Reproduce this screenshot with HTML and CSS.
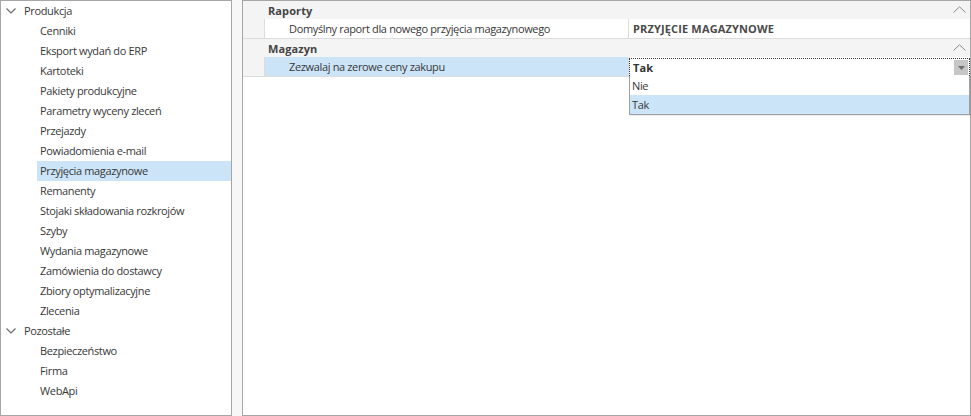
FILE: index.html
```html
<!DOCTYPE html>
<html>
  <head>
    <meta charset='UTF-8'>
    <title>Ustawienia</title>
    <link rel="stylesheet" href="styles.css">
  </head>
  <body>
    <div class='layout'>
      <div class='tree'>
        <div class='tree__node'>
          <svg class='tree__chevron' width='10' height='6' viewBox='0 0 10 6'><path d='M0.5 0.5 L5 5 L9.5 0.5' fill='none' stroke='#6a6a6a' stroke-width='1.2'/></svg>
          <span>Produkcja</span>
        </div>
        <div class='tree__item'>Cenniki</div>
        <div class='tree__item'>Eksport wydań do ERP</div>
        <div class='tree__item'>Kartoteki</div>
        <div class='tree__item'>Pakiety produkcyjne</div>
        <div class='tree__item'>Parametry wyceny zleceń</div>
        <div class='tree__item'>Przejazdy</div>
        <div class='tree__item'>Powiadomienia e-mail</div>
        <div class='tree__item tree__item--selected'>Przyjęcia magazynowe</div>
        <div class='tree__item'>Remanenty</div>
        <div class='tree__item'>Stojaki składowania rozkrojów</div>
        <div class='tree__item'>Szyby</div>
        <div class='tree__item'>Wydania magazynowe</div>
        <div class='tree__item'>Zamówienia do dostawcy</div>
        <div class='tree__item'>Zbiory optymalizacyjne</div>
        <div class='tree__item'>Zlecenia</div>
        <div class='tree__node'>
          <svg class='tree__chevron' width='10' height='6' viewBox='0 0 10 6'><path d='M0.5 0.5 L5 5 L9.5 0.5' fill='none' stroke='#6a6a6a' stroke-width='1.2'/></svg>
          <span>Pozostałe</span>
        </div>
        <div class='tree__item'>Bezpieczeństwo</div>
        <div class='tree__item'>Firma</div>
        <div class='tree__item'>WebApi</div>
      </div>

      <div class='grid'>
        <div class='grid__group'>
          <span>Raporty</span>
          <svg class='grid__collapse' width='13' height='7' viewBox='0 0 13 7'><path d='M0.5 6.5 L6.5 0.8 L12.5 6.5' fill='none' stroke='#8a8a8a' stroke-width='1'/></svg>
        </div>
        <div class='grid__row'>
          <div class='grid__label'>Domyślny raport dla nowego przyjęcia magazynowego</div>
          <div class='grid__value'>PRZYJĘCIE MAGAZYNOWE</div>
        </div>
        <div class='grid__group'>
          <span>Magazyn</span>
          <svg class='grid__collapse' width='13' height='7' viewBox='0 0 13 7'><path d='M0.5 6.5 L6.5 0.8 L12.5 6.5' fill='none' stroke='#8a8a8a' stroke-width='1'/></svg>
        </div>
        <div class='grid__row grid__row--selected'>
          <div class='grid__label'>Zezwalaj na zerowe ceny zakupu</div>
          <div class='grid__value grid__value--edit'>
            <div class='editor'>
              <span class='editor__text'>Tak</span>
              <div class='editor__btn'>
                <svg width='7' height='4' viewBox='0 0 7 4'><path d='M0 0 L7 0 L3.5 4 Z' fill='#6e6e6e'/></svg>
              </div>
            </div>
            <div class='popup'>
              <div class='popup__item'>Nie</div>
              <div class='popup__item popup__item--selected'>Tak</div>
            </div>
          </div>
        </div>
      </div>
    </div>
  </body>
</html>
```

FILE: styles.css
```css
html,
body {
	margin: 0;
}

body {
	width: 971px;
	height: 416px;
	background: #f7f7f7;
	font-family: 'Open Sans', 'Noto Sans', Arial, sans-serif;
	font-size: 11px;
	letter-spacing: -0.35px;
	color: #383838;
	overflow: hidden;
}

.layout {
	display: flex;
	gap: 10px;
	height: 416px;
}

.tree {
	width: 230px;
	height: 414px;
	border: 1px solid #a6a6a6;
	background: #fff;
	flex: none;
}

  .tree__node,
  .tree__item {
  	height: 20px;
  	line-height: 20px;
  	white-space: nowrap;
  }

  .tree__node {
  	display: flex;
  	align-items: center;
  }

  .tree__chevron {
  	margin: 0 8px 0 5px;
  }

  .tree__item {
  	margin-left: 36px;
  	padding-left: 3px;
  }

  .tree__item--selected {
  	background: #cce4f7;
  }

.grid {
	flex: 1;
	height: 414px;
	border: 1px solid #a6a6a6;
	background: #fff;
}

  .grid__group {
  	display: flex;
  	align-items: center;
  	height: 18px;
  	padding-left: 25px;
  	background: #f4f4f4;
  	font-weight: bold;
  	letter-spacing: 0.1px;
  	color: #444;
  }

  .grid__group span {
  	flex: 1;
  }

  .grid__collapse {
  	margin-right: 4px;
  	margin-top: -2px;
  }

  .grid__row {
  	display: flex;
  	height: 19px;
  	padding-left: 21px;
  	background: #f4f4f4;
  	border-bottom: 1px solid #dcdcdc;
  }

  .grid__label {
  	width: 339px;
  	padding-left: 24px;
  	line-height: 19px;
  	background: #fff;
  	border-left: 1px solid #dcdcdc;
  	white-space: nowrap;
  }

  .grid__row--selected .grid__label {
  	background: #cce4f7;
  }

  .grid__value {
  	flex: 1;
  	padding-left: 4px;
  	line-height: 19px;
  	background: #fff;
  	border-left: 1px solid #dcdcdc;
  	font-weight: bold;
  	letter-spacing: 0.15px;
  	color: #4a4a4a;
  	white-space: nowrap;
  }

  .grid__value--edit {
  	position: relative;
  	padding-left: 0;
  	color: #333;
  }

    .editor {
    	display: flex;
    	height: 17px;
    	margin-top: 1px;
    	border: 1px dotted #333;
    	border-bottom: none;
    	align-items: center;
    }

    .editor__text {
    	flex: 1;
    	padding-left: 3px;
    	line-height: 17px;
    }

    .editor__btn {
    	display: flex;
    	align-items: center;
    	justify-content: center;
    	width: 14px;
    	height: 15px;
    	margin-right: 1px;
    	background: #c6c6c6;
    }

    .popup {
    	position: absolute;
    	top: 19px;
    	left: 0;
    	right: 0;
    	border: 1px solid #a0a0a0;
    	border-top: none;
    	background: #fff;
    	box-shadow: 1px 1px 1px rgba(0, 0, 0, 0.08);
    	font-weight: normal;
    	letter-spacing: -0.35px;
    	color: #383838;
    }

    .popup__item {
    	height: 19px;
    	line-height: 19px;
    	padding-left: 2px;
    }

    .popup__item--selected {
    	background: #cce4f7;
    }
```
